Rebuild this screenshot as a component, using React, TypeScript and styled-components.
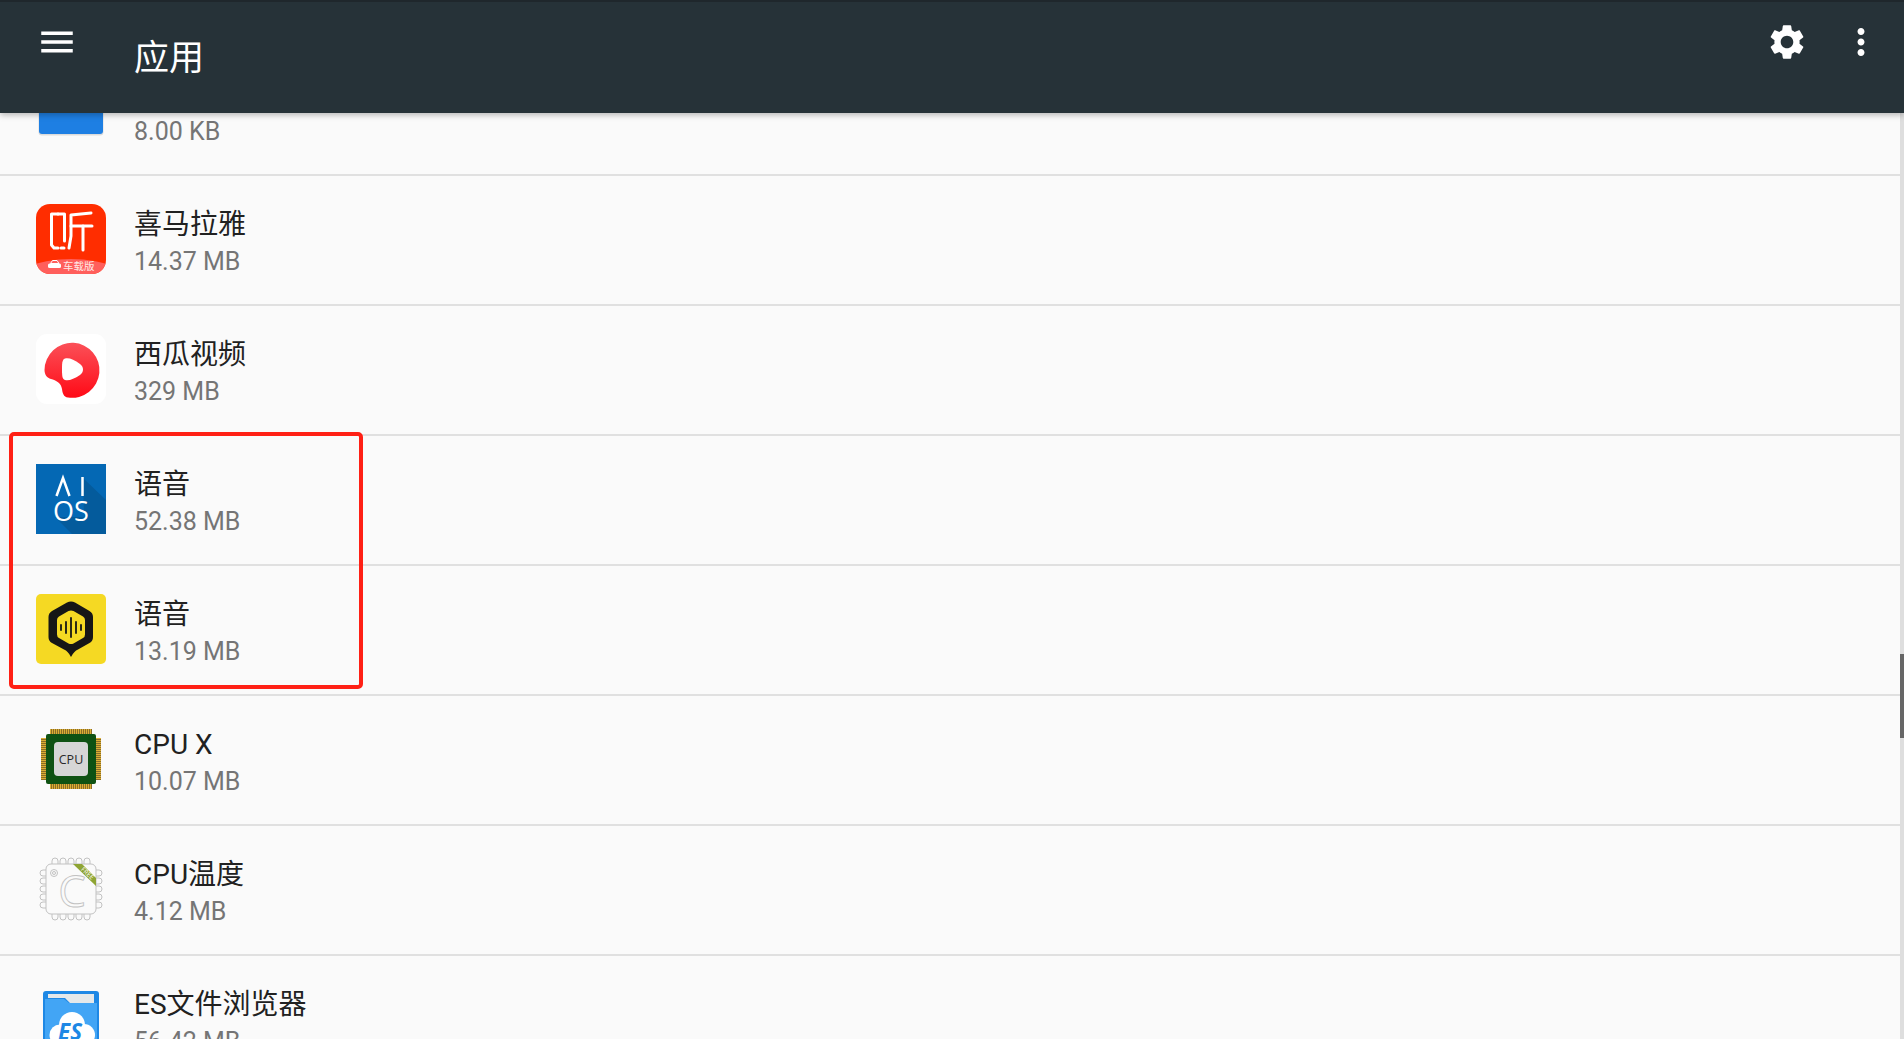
import * as React from 'react';
import styled, { createGlobalStyle } from 'styled-components';

const GlobalStyle = createGlobalStyle`
  html, body {
    margin: 0;
    padding: 0;
    background: #fafafa;
    font-family: Roboto, "Noto Sans CJK SC", sans-serif;
  }
`;

const Page = styled.div`
  width: 1904px;
  height: 1039px;
  display: flex;
  flex-direction: column;
  overflow: hidden;
  background: #fafafa;
`;

const Toolbar = styled.header`
  position: relative;
  z-index: 2;
  flex: none;
  height: 113px;
  box-sizing: border-box;
  border-top: 2px solid #1f272c;
  padding: 19px 22px 0 36px;
  display: flex;
  align-items: flex-start;
  background: #263238;
  box-shadow: 0 2px 6px rgba(0, 0, 0, 0.28);
`;

const ToolbarIcon = styled.svg`
  flex: none;
  width: 42px;
  height: 42px;
  fill: #fff;
`;

const ToolbarTitle = styled.h1`
  flex: 1;
  margin: 16px 0 0 56px;
  font-size: 35px;
  line-height: 44px;
  font-weight: 400;
  color: #fff;
`;

const ToolbarActions = styled.div`
  display: flex;
  gap: 32px;
`;

const Body = styled.main`
  position: relative;
  flex: 1;
  overflow: hidden;
`;

const List = styled.div`
  margin-top: -67px;
`;

const Highlight = styled.div`
  position: relative;

  &::after {
    content: '';
    position: absolute;
    left: 9px;
    top: -4px;
    width: 354px;
    height: 257px;
    box-sizing: border-box;
    border: 4px solid #ff2015;
    border-radius: 5px;
  }
`;

const Row = styled.div`
  height: 130px;
  box-sizing: border-box;
  padding: 28px 0 0 36px;
  display: flex;
  gap: 28px;
  border-bottom: 2px solid #e0e0e0;
`;

const AppIcon = styled.svg`
  flex: none;
  width: 70px;
  height: 70px;
`;

const RowText = styled.div`
  display: flex;
  flex-direction: column;
`;

const AppName = styled.div`
  height: 40px;
  margin-top: 2px;
  font-size: 28px;
  line-height: 38px;
  color: #212121;
`;

const AppSize = styled.div`
  font-size: 25px;
  line-height: 32px;
  color: #757575;
`;

const ScrollTrack = styled.div`
  position: absolute;
  top: 0;
  right: 0;
  bottom: 0;
  width: 4px;
  background: #dedede;
`;

const ScrollThumb = styled.div`
  height: 84px;
  margin-top: 541px;
  background: #666;
`;

const SvgFont = styled.text`
  font-family: "Open Sans", "Liberation Sans", "Noto Sans CJK SC", sans-serif;
`;

const FolderIcon = () => (
  <AppIcon viewBox="0 0 70 70">
    <rect x="2.5" y="2" width="65" height="59.5" rx="3.5" fill="#000" opacity="0.12" />
    <rect x="3" y="2" width="64" height="58" rx="3" fill="#1e7fe3" />
  </AppIcon>
);

const XimalayaIcon = () => (
  <AppIcon viewBox="0 0 70 70">
    <defs>
      <clipPath id="xmly-clip">
        <rect width="70" height="70" rx="14" />
      </clipPath>
    </defs>
    <g clipPath="url(#xmly-clip)">
      <rect width="70" height="70" fill="#ff2d00" />
      <ellipse cx="35" cy="84" rx="64" ry="29" fill="#ff5f5c" />
    </g>
    <g fill="none" stroke="#fff" strokeWidth="3" strokeLinecap="round" strokeLinejoin="round">
      <polyline points="22,10 15.5,10 15.5,41 18,44 22,44" />
      <polyline points="22,10 28.5,10 28.5,37" />
      <line x1="25" y1="44" x2="28" y2="44" />
      <polyline points="55,9 35,11 35,32 33,44" />
      <line x1="35" y1="22" x2="56" y2="22" />
      <line x1="47" y1="22" x2="47" y2="46" />
    </g>
    <rect x="12" y="59.5" width="13" height="4.5" rx="1.5" fill="#fff" />
    <polygon points="14.5,59.5 16.5,56.5 21,56.5 23,59.5" fill="none" stroke="#fff" strokeWidth="1" />
    <SvgFont x="27" y="65.5" fontSize="10.5" fill="#ffe9e8">车载版</SvgFont>
  </AppIcon>
);

const XiguaIcon = () => (
  <AppIcon viewBox="0 0 70 70">
    <defs>
      <linearGradient id="xigua-fill" x1="0" y1="0" x2="0" y2="1">
        <stop offset="0" stopColor="#fb5058" />
        <stop offset="1" stopColor="#ff0a16" />
      </linearGradient>
    </defs>
    <rect width="70" height="70" rx="11" fill="#fff" />
    <path
      d="M8.5 36 A27.5 27.5 0 1 1 32 63.5 C27.5 63 26.5 59 26 55 C25.2 49 20 46.5 15 45 C11 43.8 8.6 41 8.5 36 Z"
      fill="url(#xigua-fill)"
    />
    <path
      d="M29 24.5 C33 23.5 38 25.5 44 30 C48 33 48 38 44 41 C38 45 33 47 29 46 C26 45 26 41 26 35 C26 30 26 25.5 29 24.5 Z"
      fill="#fff"
    />
  </AppIcon>
);

const AiosIcon = () => (
  <AppIcon viewBox="0 0 70 70">
    <rect width="70" height="70" fill="#0468b4" />
    <polygon points="47,14 70,36 70,70 36,70 19,53 48,53" fill="#045b9c" />
    <g fill="none" stroke="#fff" strokeWidth="2.5">
      <polyline points="20.5,32 27,14 33.5,32" />
      <line x1="46.5" y1="13" x2="46.5" y2="32" />
    </g>
    <SvgFont x="35" y="56.5" fontSize="27" fill="#fff" textAnchor="middle">
      OS
    </SvgFont>
  </AppIcon>
);

const VoiceIcon = () => (
  <AppIcon viewBox="0 0 70 70">
    <rect width="70" height="70" rx="5" fill="#f5d923" />
    <path
      d="M31 8.5 Q35 6.5 39 8.5 L53.5 17 Q57 19 57 23 L57 43 Q57 47 53.5 49 L42 55.5 Q38 57 35 63 Q32 57 28 55.5 L16 49 Q12.5 47 12.5 43 L12.5 23 Q12.5 19 16 17 Z"
      fill="#161616"
    />
    <path
      d="M32.5 17 Q35 16 37.5 17 L47 22.5 Q49 23.7 49 26 L49 40.5 Q49 43 47 44 L37.5 49.5 Q35 50.5 32.5 49.5 L23 44 Q21 43 21 40.5 L21 26 Q21 23.7 23 22.5 Z"
      fill="#f5d923"
    />
    <g stroke="#161616" strokeWidth="1.8" strokeLinecap="round">
      <line x1="25" y1="31" x2="25" y2="36" />
      <line x1="30" y1="28" x2="30" y2="39" />
      <line x1="35" y1="24" x2="35" y2="43" />
      <line x1="40" y1="28" x2="40" y2="39" />
      <line x1="45" y1="31" x2="45" y2="36" />
    </g>
  </AppIcon>
);

const CpuXIcon = () => (
  <AppIcon viewBox="0 0 70 70">
    <defs>
      <pattern id="cpu-pins-v" width="2" height="6" patternUnits="userSpaceOnUse">
        <rect width="1.1" height="6" fill="#dcae34" />
        <rect x="1.1" width="0.9" height="6" fill="#7d5c10" />
      </pattern>
      <pattern id="cpu-pins-h" width="6" height="2" patternUnits="userSpaceOnUse">
        <rect width="6" height="1.1" fill="#dcae34" />
        <rect y="1.1" width="6" height="0.9" fill="#7d5c10" />
      </pattern>
    </defs>
    <rect x="14" y="5" width="42" height="60" fill="url(#cpu-pins-v)" />
    <rect x="5" y="14" width="60" height="42" fill="url(#cpu-pins-h)" />
    <rect x="10" y="10" width="50" height="50" rx="2" fill="#0f5213" />
    <rect x="18" y="18" width="34" height="34" rx="4" fill="#d6d6d6" />
    <SvgFont x="35" y="40" fontSize="12.5" fill="#2a2a2a" textAnchor="middle">
      CPU
    </SvgFont>
  </AppIcon>
);

const tempPins = [16, 24, 32, 40, 48];

const CpuTempIcon = () => (
  <AppIcon viewBox="0 0 70 70">
    <g fill="#fafafa" stroke="#c2c2c2" strokeWidth="1">
      {tempPins.map(p => (
        <React.Fragment key={p}>
          <rect x={p} y="4" width="6" height="12" rx="3" />
          <rect x={p} y="54" width="6" height="12" rx="3" />
          <rect x="4" y={p} width="12" height="6" rx="3" />
          <rect x="54" y={p} width="12" height="6" rx="3" />
        </React.Fragment>
      ))}
      <rect x="10" y="10" width="50" height="50" rx="5" />
      <circle cx="18" cy="19" r="3.5" />
      <circle cx="18" cy="19" r="1.5" />
    </g>
    <SvgFont
      x="36"
      y="53"
      fontSize="44"
      fill="#fafafa"
      stroke="#c2c2c2"
      strokeWidth="0.9"
      textAnchor="middle"
    >
      C
    </SvgFont>
    <polygon points="37,10 46,10 60,24 60,32" fill="#8fa534" />
    <SvgFont x="50" y="21" fontSize="6.5" fill="#fff" textAnchor="middle" transform="rotate(42 50 21)">
      FREE
    </SvgFont>
  </AppIcon>
);

const EsIcon = () => (
  <AppIcon viewBox="0 0 70 70">
    <rect x="7" y="7" width="56" height="60" rx="3" fill="#1e88e5" />
    <polygon points="12,10 58,10 58,19 34,19 29,14 12,14" fill="#e4e8ea" />
    <path d="M9 15 L28 15 L33 19 L61 19 L61 67 L9 67 Z" fill="#42a5f5" />
    <circle cx="36" cy="41" r="13" fill="#fff" />
    <circle cx="24" cy="51" r="10.5" fill="#fff" />
    <circle cx="48" cy="51" r="11" fill="#fff" />
    <rect x="22" y="50" width="28" height="14" fill="#fff" />
    <SvgFont
      x="34"
      y="56"
      fontSize="24"
      fontWeight="700"
      fontStyle="italic"
      fill="#1e88e5"
      textAnchor="middle"
      textLength="24"
      lengthAdjust="spacingAndGlyphs"
    >
      ES
    </SvgFont>
  </AppIcon>
);

interface IAppRow {
  name: string;
  size: string;
  icon: React.ReactNode;
}

const AppRow: React.FC<IAppRow> = ({ name, size, icon }) => (
  <Row>
    {icon}
    <RowText>
      <AppName>{name}</AppName>
      <AppSize>{size}</AppSize>
    </RowText>
  </Row>
);

const App: React.FC = () => (
  <Page>
    <GlobalStyle />
    <Toolbar>
      <ToolbarIcon viewBox="0 0 24 24">
        <path d="M3 18h18v-2H3v2zm0-5h18v-2H3v2zm0-7v2h18V6H3z" />
      </ToolbarIcon>
      <ToolbarTitle>应用</ToolbarTitle>
      <ToolbarActions>
        <ToolbarIcon viewBox="0 0 24 24">
          <path d="M19.14 12.94c.04-.3.06-.61.06-.94 0-.32-.02-.64-.07-.94l2.03-1.58c.18-.14.23-.41.12-.61l-1.92-3.32c-.12-.22-.37-.29-.59-.22l-2.39.96c-.5-.38-1.03-.7-1.62-.94l-.36-2.54c-.04-.24-.24-.41-.48-.41h-3.84c-.24 0-.43.17-.47.41l-.36 2.54c-.59.24-1.13.57-1.62.94l-2.39-.96c-.22-.08-.47 0-.59.22L2.74 8.87c-.12.21-.08.47.12.61l2.03 1.58c-.05.3-.09.63-.09.94s.02.64.07.94l-2.03 1.58c-.18.14-.23.41-.12.61l1.92 3.32c.12.22.37.29.59.22l2.39-.96c.5.38 1.03.7 1.62.94l.36 2.54c.05.24.24.41.48.41h3.84c.24 0 .44-.17.47-.41l.36-2.54c.59-.24 1.13-.56 1.62-.94l2.39.96c.22.08.47 0 .59-.22l1.92-3.32c.12-.22.07-.47-.12-.61l-2.01-1.58zM12 15.6c-1.98 0-3.6-1.62-3.6-3.6s1.62-3.6 3.6-3.6 3.6 1.62 3.6 3.6-1.62 3.6-3.6 3.6z" />
        </ToolbarIcon>
        <ToolbarIcon viewBox="0 0 24 24">
          <path d="M12 8c1.1 0 2-.9 2-2s-.9-2-2-2-2 .9-2 2 .9 2 2 2zm0 2c-1.1 0-2 .9-2 2s.9 2 2 2 2-.9 2-2-.9-2-2-2zm0 6c-1.1 0-2 .9-2 2s.9 2 2 2 2-.9 2-2-.9-2-2-2z" />
        </ToolbarIcon>
      </ToolbarActions>
    </Toolbar>
    <Body>
      <List>
        <AppRow name=" " size="8.00 KB" icon={<FolderIcon />} />
        <AppRow name="喜马拉雅" size="14.37 MB" icon={<XimalayaIcon />} />
        <AppRow name="西瓜视频" size="329 MB" icon={<XiguaIcon />} />
        <Highlight>
          <AppRow name="语音" size="52.38 MB" icon={<AiosIcon />} />
          <AppRow name="语音" size="13.19 MB" icon={<VoiceIcon />} />
        </Highlight>
        <AppRow name="CPU X" size="10.07 MB" icon={<CpuXIcon />} />
        <AppRow name="CPU温度" size="4.12 MB" icon={<CpuTempIcon />} />
        <AppRow name="ES文件浏览器" size="56.42 MB" icon={<EsIcon />} />
      </List>
      <ScrollTrack>
        <ScrollThumb />
      </ScrollTrack>
    </Body>
  </Page>
);

export default App;
